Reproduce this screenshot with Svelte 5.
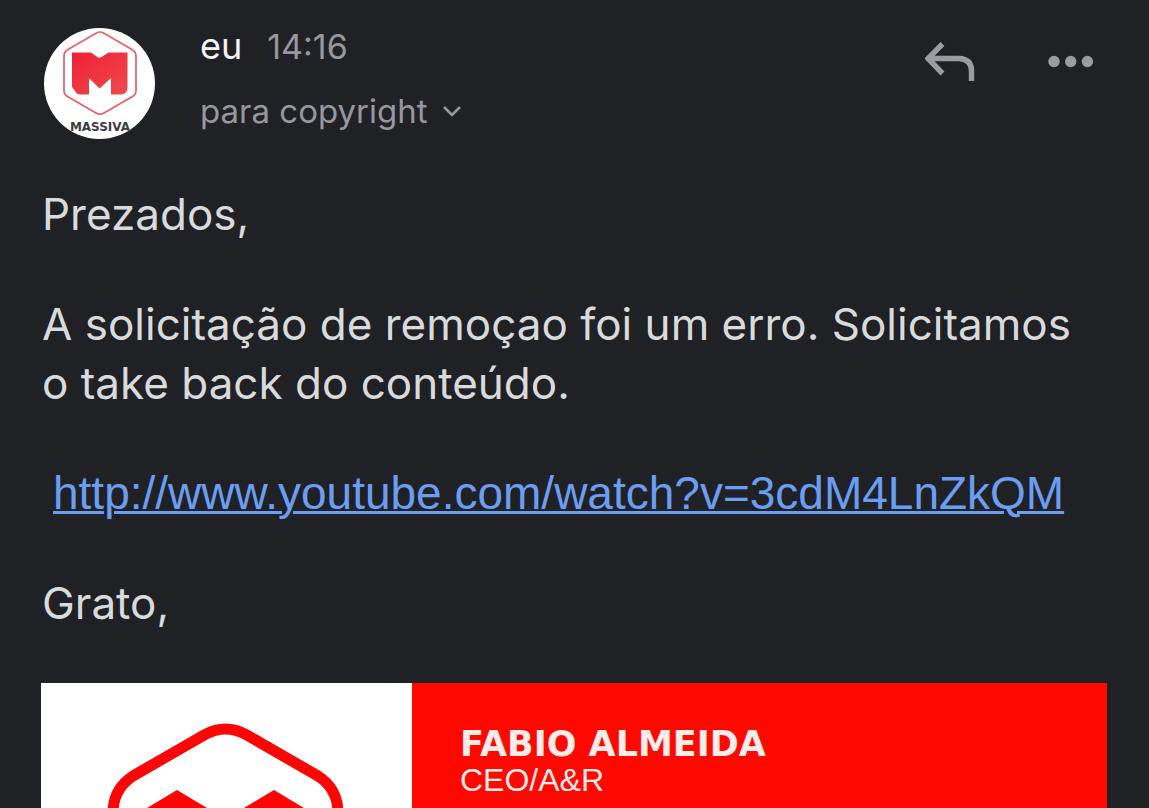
<script>
  const sender = 'eu';
  const time = '14:16';
  const link = 'http://www.youtube.com/watch?v=3cdM4LnZkQM';
</script>

<main class="message">
  <header class="head">
    <svg class="avatar" viewBox="0 0 111 111" role="img" aria-label="Massiva">
      <defs>
        <linearGradient id="mark" x1="0" y1="0" x2="1" y2="1">
          <stop offset="0" stop-color="#ee2136" />
          <stop offset="1" stop-color="#f04a4c" />
        </linearGradient>
        <clipPath id="disc"><circle cx="55.5" cy="55.5" r="55.5" /></clipPath>
      </defs>
      <g clip-path="url(#disc)">
        <rect width="111" height="111" fill="#fff" />
        <path
          d="M52 5.2Q56 2.8 60 5.2L88 21.4Q92 23.7 92 28V62.5Q92 66.5 88 68.8L60 85Q56 87.4 52 85L24 68.8Q20 66.5 20 62.5V28Q20 23.7 24 21.4Z"
          fill="none"
          stroke="#e5606a"
          stroke-width="1.7"
        />
        <path
          d="M28 24.5H47L53 28.7Q55.500 30.500 58 28.700L64.500 24.500H83.500V60Q83 66 77 66.500H67V50L55.500 60.500L45 50V66.500H36Q33 66.500 31 63L28 59Z"
          fill="url(#mark)"
        />
        <text class="brand" x="56" y="103" text-anchor="middle">MASSIVA</text>
      </g>
    </svg>

    <div class="who">
      <div class="line">
        <span class="sender">{sender}</span>
        <time class="time">{time}</time>
      </div>
      <button class="recipients" type="button">
        para copyright
        <svg width="20" height="14" viewBox="0 0 20 14" aria-hidden="true">
          <path d="M2 3L10 11L18 3" fill="none" stroke="currentColor" stroke-width="2.6" />
        </svg>
      </button>
    </div>

    <div class="actions">
      <button type="button" aria-label="Responder">
        <svg width="52" height="42" viewBox="0 0 52 42" aria-hidden="true">
          <path
            d="M17.500 3L3 17.500L17.500 32.500M3 17.500H34Q46.500 18 46.500 30V40"
            fill="none"
            stroke="currentColor"
            stroke-width="5.4"
          />
        </svg>
      </button>
      <button type="button" aria-label="Mais">
        <svg width="46" height="42" viewBox="0 0 46 42" fill="currentColor" aria-hidden="true">
          <circle cx="6" cy="20.500" r="5.7" />
          <circle cx="22.7" cy="20.500" r="5.7" />
          <circle cx="39.4" cy="20.500" r="5.7" />
        </svg>
      </button>
    </div>
  </header>

  <article class="body">
    <p>Prezados,</p>
    <p>A solicitação de remoçao foi um erro. Solicitamos o take back do conteúdo.</p>
    <p class="url"><a href={link}>{link}</a></p>
    <p>Grato,</p>
  </article>

  <section class="signature">
    <div class="logo">
      <svg viewBox="0 0 371 340" role="img" aria-label="Massiva">
        <path
          d="M164 51.5Q184.5 40.500 205 51.500L277 93Q297 106 297 130V220Q297 242 277 254L205 295Q184.500 307 164 295L92 254Q72 242 72 220V130Q72 106 92 93Z"
          fill="none"
          stroke="#fb0505"
          stroke-width="11"
        />
        <path
          d="M136 107L184.500 136L233 107L268 128V230L222 254V186L184.500 210L147 186V254L101 230V128Z"
          fill="#fb0505"
        />
      </svg>
    </div>
    <div class="card">
      <strong>FABIO ALMEIDA</strong>
      <span>CEO/A&amp;R</span>
    </div>
  </section>
</main>

<style>
  :global(body) {
    margin: 0;
    background: #202125;
  }

  .message {
    box-sizing: border-box;
    height: 100vh;
    overflow: hidden;
    padding: 28px 42px 0 41px;
    background: #202125;
    color: #d9dadc;
    font-family: Inter, 'Liberation Sans', sans-serif;
  }

  button {
    display: flex;
    align-items: center;
    padding: 0;
    border: 0;
    background: none;
    color: #9b9ca3;
    font: inherit;
    cursor: pointer;
  }

  .head {
    display: flex;
    align-items: flex-start;
    padding-left: 3px;
  }

  .avatar {
    flex: none;
    width: 111px;
    height: 111px;
  }

  .brand {
    fill: #3c3c40;
    font: bold 12px 'DejaVu Sans', sans-serif;
  }

  .who {
    flex: 1;
    display: flex;
    flex-direction: column;
    gap: 28px;
    margin-left: 45px;
  }

  .line {
    display: flex;
    align-items: baseline;
    gap: 25px;
    line-height: 36px;
  }

  .sender {
    color: #f4f5f8;
    font-size: 36px;
  }

  .time {
    color: #97989d;
    font-size: 34px;
  }

  .recipients {
    gap: 14px;
    color: #97989d;
    font-size: 33px;
    line-height: 36px;
  }

  .actions {
    display: flex;
    gap: 71px;
    padding: 13px 13px 0 0;
  }

  .body {
    margin-top: 46px;
    padding-left: 1px;
    font-size: 44px;
    line-height: 59px;
  }

  p {
    margin: 0 0 51px;
  }

  p:last-child {
    margin-bottom: 50px;
  }

  .url {
    padding-left: 11px;
    font-family: 'Liberation Sans', Arial, sans-serif;
    font-size: 46px;
  }

  a {
    color: #6b9df2;
    text-decoration-thickness: 3px;
  }

  .signature {
    display: grid;
    grid-template-columns: 371fr 695fr;
  }

  .logo {
    background: #fff;
  }

  .logo svg {
    display: block;
    width: 100%;
  }

  .card {
    display: flex;
    flex-direction: column;
    padding: 43px 48px;
    background: #ff0800;
    color: #ffecea;
    font-family: 'Liberation Sans', Arial, sans-serif;
    font-size: 32px;
    line-height: 36px;
  }

  .card strong {
    font-family: 'DejaVu Sans', sans-serif;
    font-weight: 700;
    font-size: 35px;
  }
</style>
